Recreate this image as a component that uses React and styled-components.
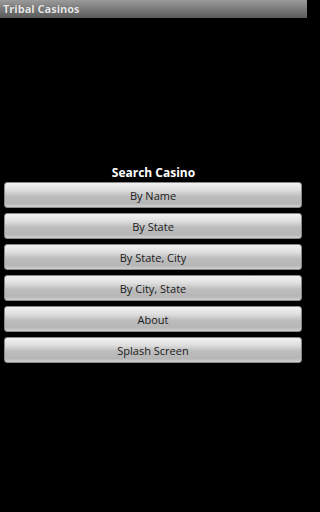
import React from "react";
import styled, { createGlobalStyle } from "styled-components";

const Global = createGlobalStyle`
  html, body { margin: 0; padding: 0; background: #000; }
  body { font-family: "Open Sans", "DejaVu Sans", sans-serif; }
`;

const Screen = styled.div`
  width: 307px;
  height: 512px;
  background: #000;
  display: flex;
  flex-direction: column;
`;

const TitleBar = styled.div`
  height: 18px;
  background: linear-gradient(#9a9a9a, #5a5a5a);
  color: #e8e8e8;
  font-weight: 700;
  font-size: 11px;
  line-height: 18px;
  padding-left: 3px;
  text-shadow: 0 0 1px rgba(0,0,0,0.4);
`;

const Content = styled.div`
  flex: 1;
  display: flex;
  flex-direction: column;
  padding: 147px 4px 0 4px;
`;

const Heading = styled.div`
  color: #fff;
  font-weight: 700;
  font-size: 12px;
  line-height: 16px;
  text-align: center;
  margin-bottom: 1px;
`;

const List = styled.div`
  display: flex;
  flex-direction: column;
  gap: 5px;
`;

const Btn = styled.div`
  height: 26px;
  width: 298px;
  box-sizing: border-box;
  border-radius: 3px;
  border: 1px solid #8a8a8a;
  background: linear-gradient(
    #f2f2f2 0%,
    #dedede 30%,
    #bdbdbd 55%,
    #b6b6b6 85%,
    #d0d0d0 100%
  );
  display: flex;
  align-items: center;
  justify-content: center;
  color: #1a1a1a;
  font-size: 11px;
`;

const items = ["By Name", "By State", "By State, City", "By City, State", "About", "Splash Screen"];

export default function App() {
  return (
    <>
      <Global />
      <Screen>
        <TitleBar>Tribal Casinos</TitleBar>
        <Content>
          <Heading>Search Casino</Heading>
          <List>
            {items.map((t) => (
              <Btn key={t}>{t}</Btn>
            ))}
          </List>
        </Content>
      </Screen>
    </>
  );
}
